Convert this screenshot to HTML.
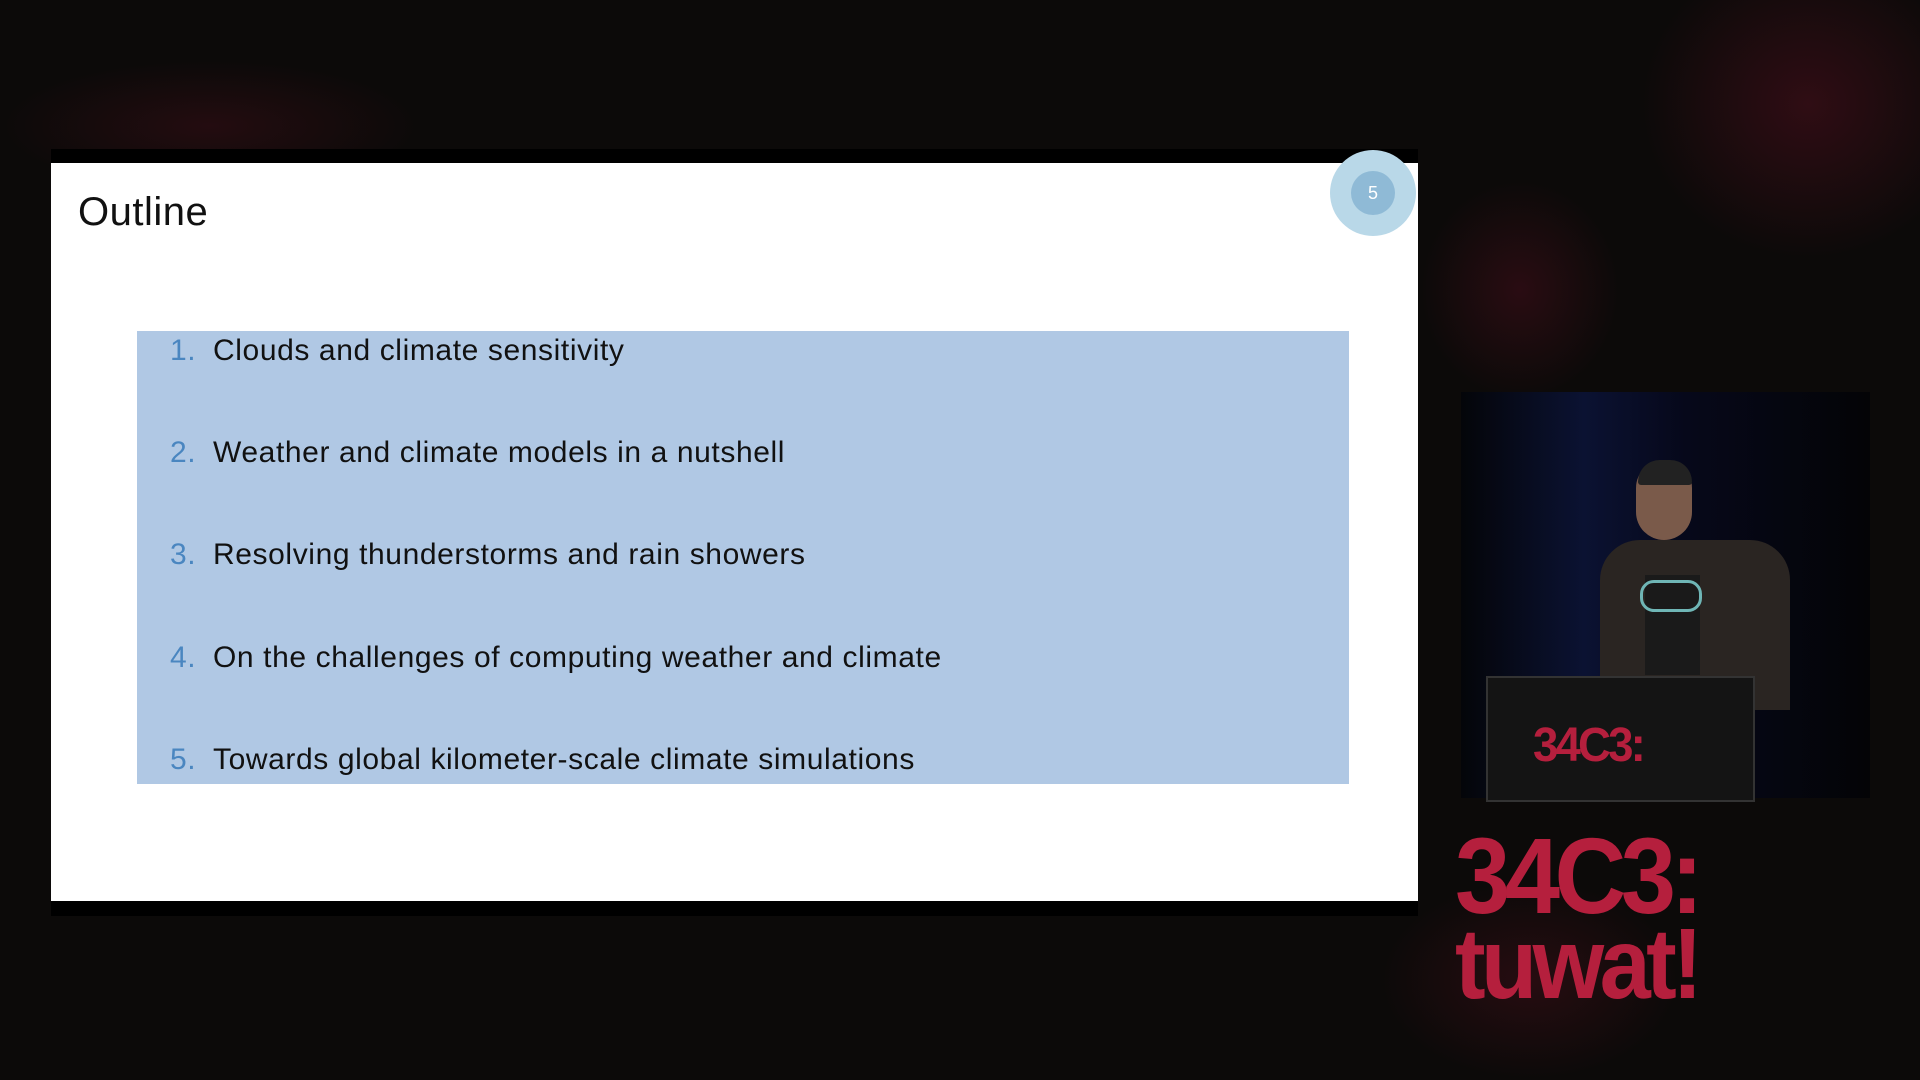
<!DOCTYPE html>
<html><head><meta charset="utf-8"><style>
body{margin:0;width:1920px;height:1080px;background:#0c0a09;position:relative;overflow:hidden;font-family:"Liberation Sans",sans-serif}
.a{position:absolute}
.item{position:absolute;left:170px;font-size:30px;letter-spacing:0.6px;color:#111;white-space:nowrap}
.item b{font-weight:normal;color:#4a86c0;display:inline-block;width:43px}
.logo{position:absolute;color:#b51f3d;font-weight:bold;font-family:"Liberation Sans",sans-serif;transform-origin:0 0;line-height:1}
</style></head><body>
<div class="a" style="left:0;top:60px;width:420px;height:110px;background:radial-gradient(ellipse at 50% 60%,rgba(120,20,40,.22),transparent 70%)"></div>
<div class="a" style="left:1640px;top:0;width:280px;height:260px;background:radial-gradient(ellipse at 60% 40%,rgba(130,20,45,.3),transparent 70%)"></div>
<div class="a" style="left:1420px;top:180px;width:200px;height:220px;background:radial-gradient(ellipse at 50% 50%,rgba(130,20,45,.25),transparent 70%)"></div>
<div class="a" style="left:1380px;top:880px;width:300px;height:200px;background:radial-gradient(ellipse at 50% 50%,rgba(120,20,40,.25),transparent 70%)"></div>
<div class="a" style="left:51px;top:149px;width:1367px;height:767px;background:#000"></div>
<div class="a" style="left:51px;top:163px;width:1367px;height:738px;background:#fff"></div>
<div class="a" style="left:78px;top:190px;font-size:40px;letter-spacing:0.5px;color:#111">Outline</div>
<div class="a" style="left:1330px;top:150px;width:86px;height:86px;border-radius:50%;background:#b9d8e8"></div>
<div class="a" style="left:1351px;top:171px;width:44px;height:44px;border-radius:50%;background:#8fbad6;color:#fff;font-size:18px;text-align:center;line-height:44px">5</div>
<div class="a" style="left:137px;top:331px;width:1212px;height:453px;background:#b0c8e4"></div>
<div class="item" style="top:334px"><b>1.</b>Clouds and climate sensitivity</div>
<div class="item" style="top:436px"><b>2.</b>Weather and climate models in a nutshell</div>
<div class="item" style="top:538px"><b>3.</b>Resolving thunderstorms and rain showers</div>
<div class="item" style="top:641px"><b>4.</b>On the challenges of computing weather and climate</div>
<div class="item" style="top:743px"><b>5.</b>Towards global kilometer-scale climate simulations</div>
<div class="a" style="left:1461px;top:392px;width:409px;height:406px;background:linear-gradient(90deg,#040509,#0b1232 30%,#06081a 55%,#040406)"></div>
<div class="a" style="left:1600px;top:540px;width:190px;height:170px;background:#2a2522;border-radius:40px 40px 0 0"></div>
<div class="a" style="left:1645px;top:575px;width:55px;height:100px;background:#1a1a1a"></div>
<div class="a" style="left:1640px;top:580px;width:56px;height:26px;border:3px solid #6fb6b6;border-radius:14px"></div>
<div class="a" style="left:1636px;top:460px;width:56px;height:80px;background:#7a5a4a;border-radius:28px"></div>
<div class="a" style="left:1638px;top:460px;width:54px;height:25px;background:#222;border-radius:28px 28px 4px 4px"></div>
<div class="a" style="left:1486px;top:676px;width:265px;height:122px;background:#141414;border:2px solid #333"></div>
<div class="logo" style="left:1533px;top:722px;font-size:48px;letter-spacing:-3px;transform:scaleX(.95)">34C3:</div>
<div class="logo" style="left:1455px;top:822px;font-size:108px;letter-spacing:-6px;transform:scaleX(.92)">34C3:</div>
<div class="logo" style="left:1455px;top:914px;font-size:100px;letter-spacing:-5px;transform:scaleX(.92)">tuwat!</div>
</body></html>
